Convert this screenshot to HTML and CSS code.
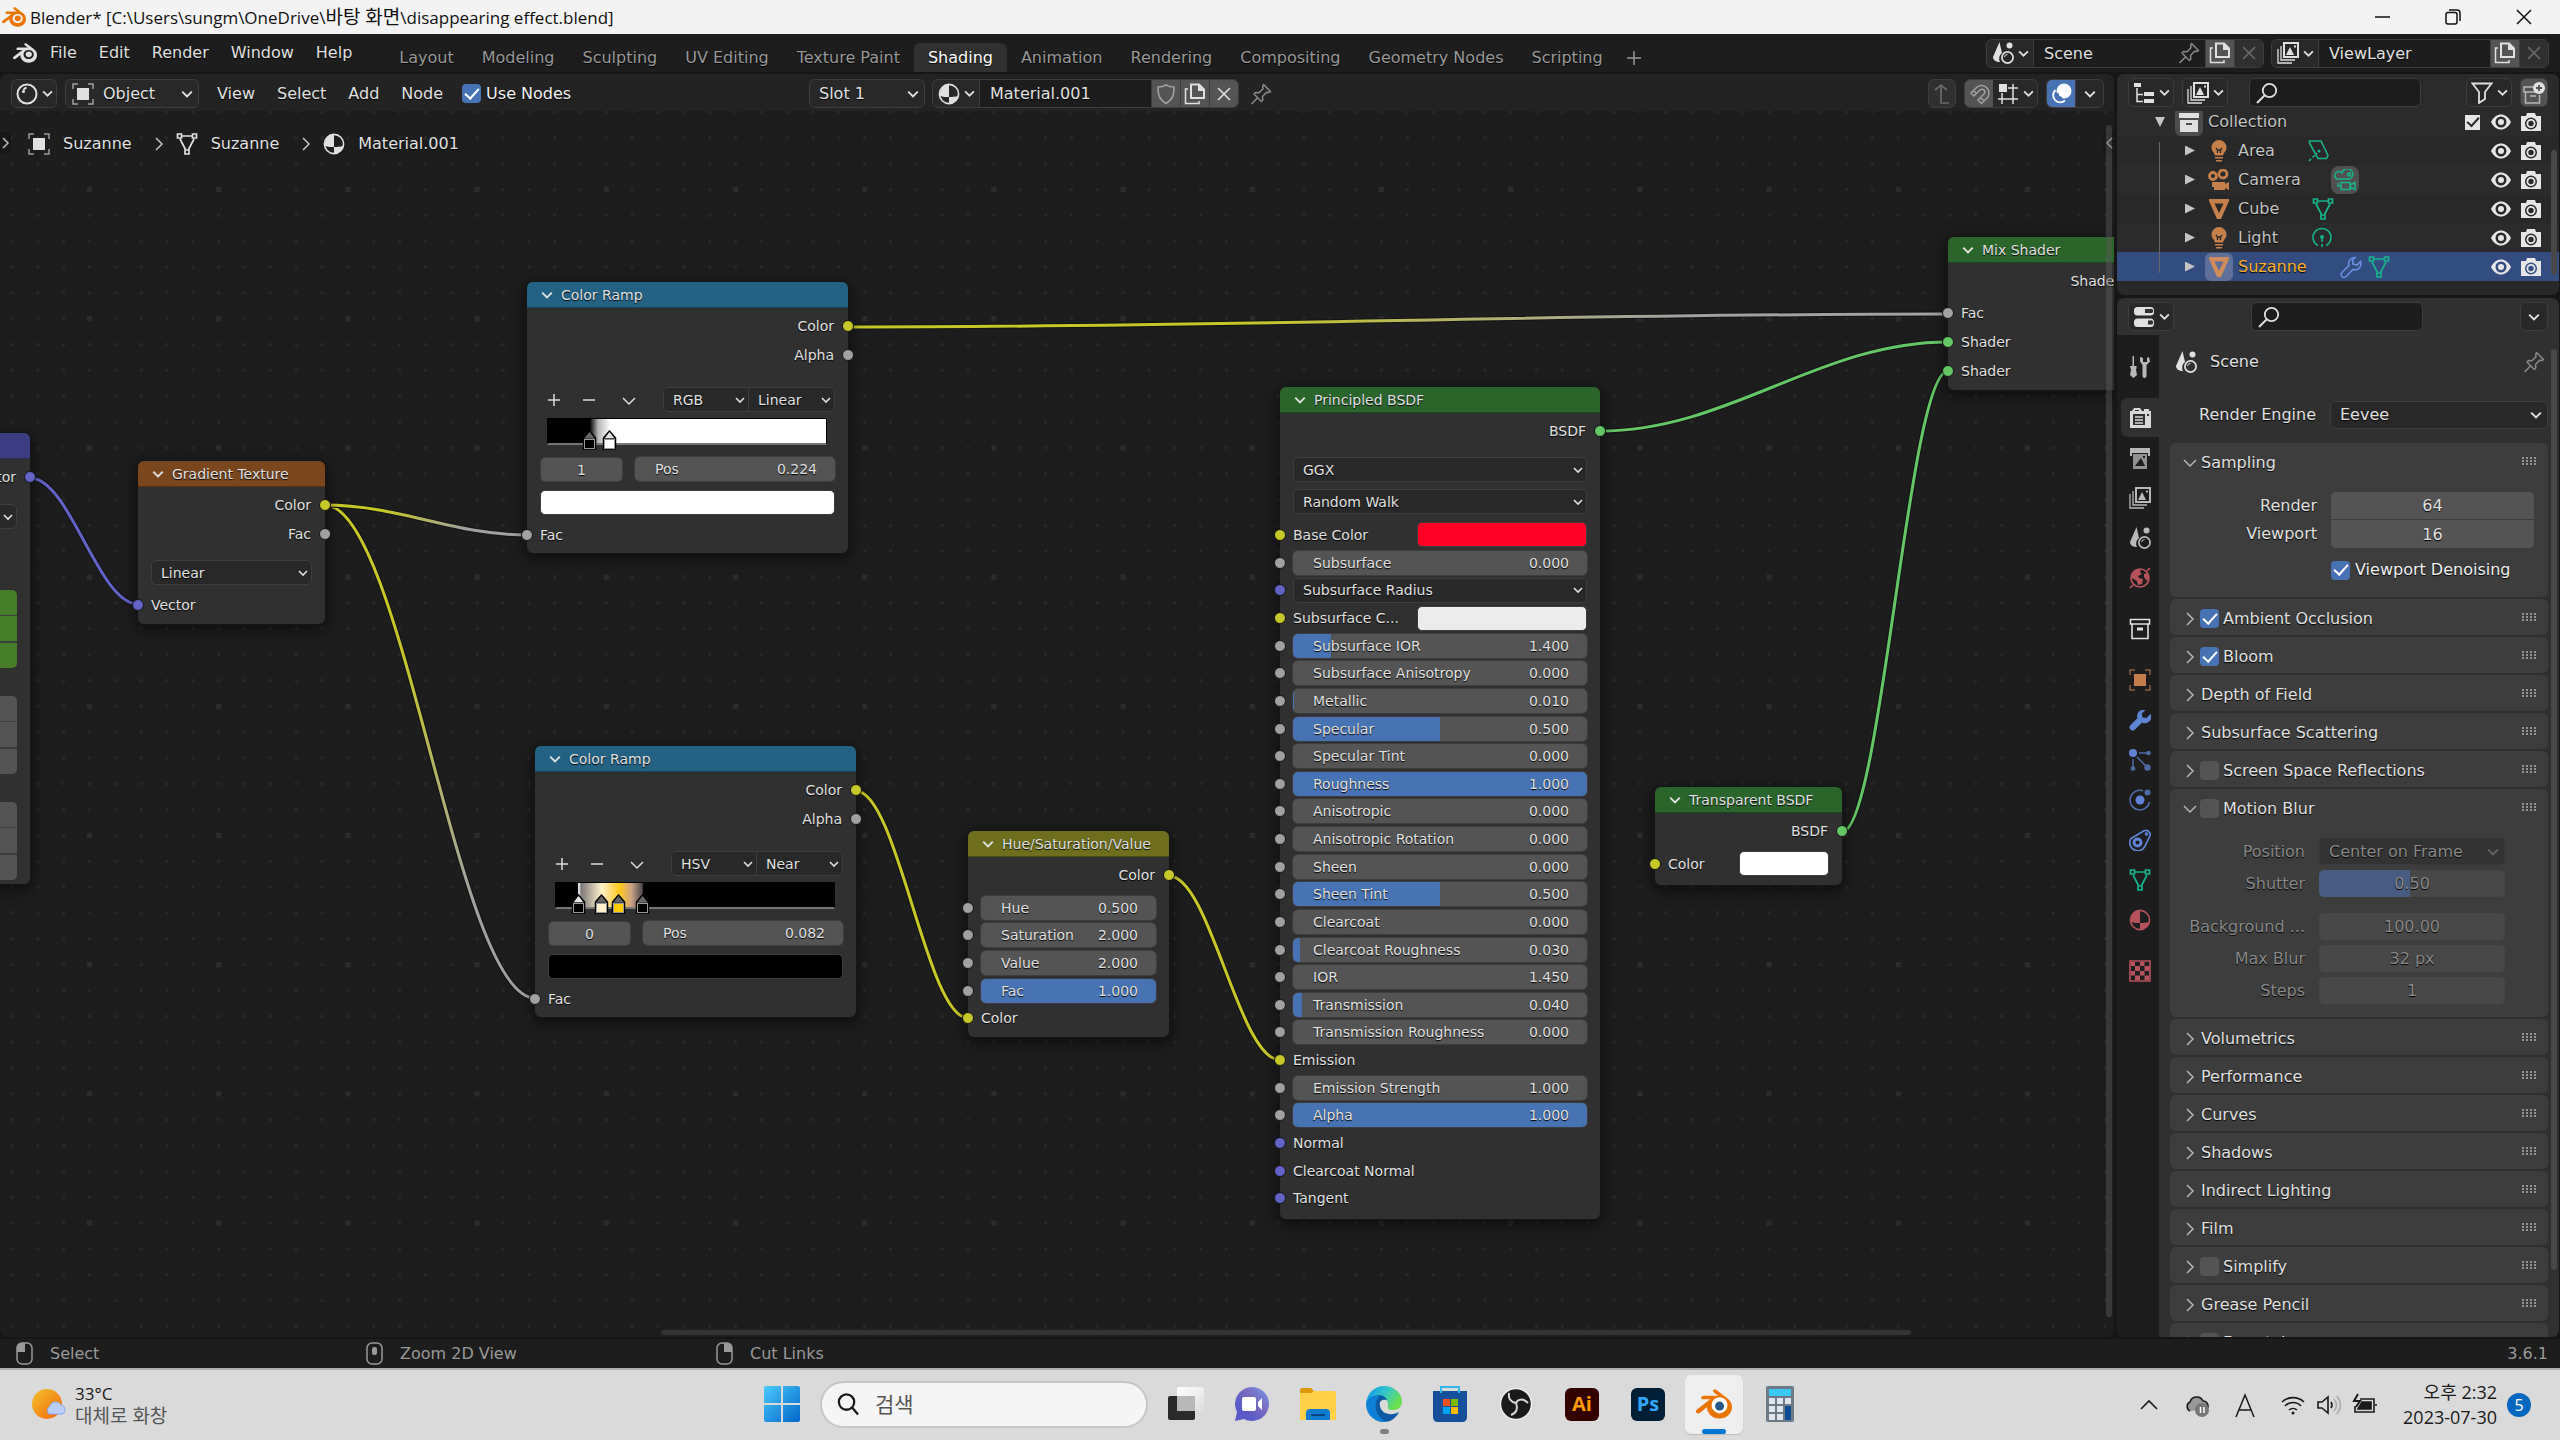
FILE: index.html
```html
<!DOCTYPE html>
<html lang="ko">
<head>
  <meta charset="UTF-8" />
  <meta name="viewport" content="width=device-width, initial-scale=1.0" />
  <title>Blender* [C:\Users\sungm\OneDrive\바탕 화면\disappearing effect.blend]</title>
  <link rel="stylesheet" href="styles.css">
</head>
<body>
  <!-- icon set -->
  <svg class="defs" width="0" height="0" aria-hidden="true">
    <symbol id="chev" viewBox="0 0 10 10"><path d="M1 3l4 4 4-4" fill="none" stroke="currentColor" stroke-width="1.6"/></symbol>
    <symbol id="blender" viewBox="0 0 24 24"><path fill="currentColor" d="M12.51 13.214c.046-.8.438-1.506 1.03-2.006a3.424 3.424 0 0 1 2.212-.79c.85 0 1.631.3 2.211.79.592.5.983 1.206 1.028 2.005.045.823-.285 1.586-.865 2.153a3.389 3.389 0 0 1-2.374.938 3.393 3.393 0 0 1-2.376-.938c-.58-.567-.91-1.33-.865-2.152M7.35 14.831c.006.314.106.922.256 1.398a7.372 7.372 0 0 0 1.593 2.757 8.227 8.227 0 0 0 2.787 2.001 8.947 8.947 0 0 0 3.66.76 8.964 8.964 0 0 0 3.657-.772 8.285 8.285 0 0 0 2.785-2.01 7.428 7.428 0 0 0 1.592-2.762 6.964 6.964 0 0 0 .25-3.074 7.123 7.123 0 0 0-1.016-2.779 7.764 7.764 0 0 0-1.852-2.043h.002L13.566 2.55l-.02-.015c-.492-.378-1.319-.376-1.86.002-.547.382-.609 1.015-.123 1.415l-.001.001 3.126 2.543-9.53.01h-.013c-.788.001-1.545.518-1.695 1.172-.154.665.38 1.217 1.2 1.22V8.9l4.83-.01-8.62 6.617-.034.025c-.813.622-1.075 1.658-.563 2.313.52.667 1.625.668 2.447.004L7.414 14s-.069.52-.063.831zm12.09 1.741c-.97.988-2.326 1.548-3.795 1.55-1.47.004-2.827-.552-3.797-1.538a4.51 4.51 0 0 1-1.036-1.622 4.282 4.282 0 0 1 .282-3.519 4.702 4.702 0 0 1 1.153-1.371c.942-.768 2.141-1.183 3.396-1.185 1.256-.002 2.455.41 3.398 1.175.48.391.87.854 1.152 1.367a4.28 4.28 0 0 1 .522 1.706 4.236 4.236 0 0 1-.239 1.811 4.54 4.54 0 0 1-1.035 1.626"/></symbol>
    <symbol id="shader" viewBox="0 0 22 22"><circle cx="11" cy="11" r="9.5" fill="none" stroke="currentColor" stroke-width="2"/><circle cx="7.5" cy="8.5" r="1.5" fill="currentColor"/><path d="M7.5 7a6 6 0 0 1 3-2.500" fill="none" stroke="currentColor" stroke-width="2"/></symbol>
    <symbol id="object" viewBox="0 0 22 22"><rect x="5" y="5" width="12" height="12" fill="currentColor"/><path d="M1 6V1h5M16 1h5v5M21 16v5h-5M6 21H1v-5" fill="none" stroke="currentColor" stroke-width="1.500" opacity=".65"/></symbol>
    <symbol id="mesh" viewBox="0 0 22 22"><g fill="none" stroke="currentColor" stroke-width="1.700"><path d="M6 3h10M4 6l5.500 10.500M18 6l-5.500 10.500"/><path d="M1.500 1h4v4h-4zM16.500 1h4v4h-4zM9 17h4v4H9z"/></g></symbol>
    <symbol id="meshfill" viewBox="0 0 22 22"><path fill="currentColor" fill-rule="evenodd" d="M1 1h20v2l-8 18H9L1 3zM6.500 5.500L11 15l4.500-9.500z"/></symbol>
    <symbol id="material" viewBox="0 0 22 22"><circle cx="11" cy="11" r="9.600" fill="none" stroke="currentColor" stroke-width="1.600"/><path fill="currentColor" d="M11 1.500A9.500 9.500 0 0 0 2 13c3 1 6 1 9 1zM11 14c3.500 0 6-.300 9-1a9.500 9.500 0 0 1-9 8z"/></symbol>
    <symbol id="shield" viewBox="0 0 22 22"><path d="M11 2c3 2 5.500 2 8 2 0 8-1 12-8 16.500C4 16 3 12 3 4c2.500 0 5 0 8-2z" fill="none" stroke="currentColor" stroke-width="1.600"/></symbol>
    <symbol id="copy" viewBox="0 0 22 22"><path d="M7 1.500h8l5 5V15H7z" fill="none" stroke="currentColor" stroke-width="2"/><path d="M14 1v7h7z" fill="currentColor"/><path d="M4 6H1.500v14.500H15V18" fill="none" stroke="currentColor" stroke-width="1.500"/></symbol>
    <symbol id="close" viewBox="0 0 22 22"><path d="M5 5l12 12M17 5L5 17" stroke="currentColor" stroke-width="1.600"/></symbol>
    <symbol id="pin" viewBox="0 0 22 22"><path d="M13.500 1.500l7 7-2 1-2-.300-4 4.300.300 3.500-1.500 1.500L4 11l1.500-1.500 3.500.300 4-4-.300-2zM8 14.500L1.500 21" fill="none" stroke="currentColor" stroke-width="1.500" stroke-linejoin="round"/></symbol>
    <symbol id="scene" viewBox="0 0 22 22"><path d="M7.500 0L1 15c0 3 3 5 7 5a7 7 0 0 1 2-9z" fill="currentColor"/><circle cx="17.500" cy="3.500" r="3" fill="currentColor"/><circle cx="15.500" cy="15.500" r="5.600" fill="none" stroke="currentColor" stroke-width="1.700"/><path d="M12.500 15a3 3 0 0 1 3-2.500" fill="none" stroke="currentColor"/></symbol>
    <symbol id="layers" viewBox="0 0 22 22"><g fill="none" stroke="currentColor"><path d="M7 1h14v14H7z" stroke-width="2"/><path d="M4 4v14h14M1 7v14h14" stroke-width="1.300"/></g><path d="M9 13l4-8 4 8zM17 3.500h2v2h-2z" fill="currentColor"/></symbol>
    <symbol id="up" viewBox="0 0 22 22"><path d="M4 7l6-5 6 5M10 2v18h8" fill="none" stroke="currentColor" stroke-width="1.700"/></symbol>
    <symbol id="magnet" viewBox="0 0 22 22"><path d="M3 10l6-6a7.500 7.500 0 0 1 10.500 10.500l-6 6-3.500-3.500 6-6a2.600 2.600 0 0 0-4-4l-6 6zM5.500 7.500L9 11M12.500 14.500L16 18" fill="none" stroke="currentColor" stroke-width="1.500"/></symbol>
    <symbol id="snap" viewBox="0 0 22 22"><path d="M5 10v11M16 1v20M1 16h20M11 5h10" fill="none" stroke="currentColor" stroke-width="1.500"/><rect x="2" y="1" width="8" height="8" fill="currentColor"/></symbol>
    <symbol id="overlay" viewBox="0 0 22 22"><circle cx="14" cy="8" r="7.500" fill="currentColor"/><path d="M5.500 7a7 7 0 1 0 9.500 10.500" fill="none" stroke="currentColor" stroke-width="1.800"/><path d="M8 10a3.500 3.500 0 0 0 4 4.500" fill="none" stroke="#4772b3" stroke-width="1.800"/></symbol>
    <symbol id="outliner" viewBox="0 0 22 22"><path fill="currentColor" d="M1 1h7v4H1zM11 10h10v4H11zM11 17h10v4H11z"/><path d="M4 6v13.500h6M4 12.500h6" fill="none" stroke="currentColor" stroke-width="1.500"/></symbol>
    <symbol id="search" viewBox="0 0 22 22"><circle cx="13.500" cy="8.500" r="6.700" fill="none" stroke="currentColor" stroke-width="1.800"/><path d="M9 13l-8 8" stroke="currentColor" stroke-width="2"/></symbol>
    <symbol id="filter" viewBox="0 0 22 22"><path d="M1.500 1.500h19L14 10v7l-6 4V10z" fill="none" stroke="currentColor" stroke-width="1.800"/></symbol>
    <symbol id="newcol" viewBox="0 0 22 22"><path d="M10 5H1v5h12M2.500 10v11h14v-8M7 14h6" fill="none" stroke="currentColor" stroke-width="1.500" opacity=".7"/><circle cx="16" cy="6" r="6" fill="currentColor"/><path d="M16 3v6M13 6h6" stroke="#545454" stroke-width="1.800"/></symbol>
    <symbol id="colfill" viewBox="0 0 22 22"><path fill="currentColor" fill-rule="evenodd" d="M1 2h20v5H1zM2 9h18v12H2zM8 12h6v2H8z"/></symbol>
    <symbol id="col" viewBox="0 0 22 22"><path d="M1.500 1.500h19V6h-19zM3 6v14.500h16V6" fill="none" stroke="currentColor" stroke-width="1.600"/><path d="M8 11h6" stroke="currentColor" stroke-width="3"/></symbol>
    <symbol id="eye" viewBox="0 0 22 22"><path fill="currentColor" fill-rule="evenodd" d="M1 11c3-5.500 6-7.500 10-7.500S18 5.500 21 11c-3 5.500-6 7.500-10 7.500S4 16.500 1 11zM11 5.500a5.500 5.500 0 1 0 0 11 5.500 5.500 0 0 0 0-11z"/><circle cx="11" cy="11" r="3" fill="currentColor"/></symbol>
    <symbol id="cam" viewBox="0 0 22 22"><path fill="currentColor" fill-rule="evenodd" d="M1 5h5l1-3h8l1 3h5v15H1zM11 6.500a6 6 0 1 0 0 12 6 6 0 0 0 0-12z"/><circle cx="11" cy="12.500" r="3.600" fill="none" stroke="currentColor" stroke-width="1.800"/></symbol>
    <symbol id="bulb" viewBox="0 0 22 22"><path fill="currentColor" d="M11 0a7.500 7.500 0 0 0-7.500 7.500C3.500 11 6 12 7 15.500h8c1-3.500 3.500-4.500 3.500-8A7.500 7.500 0 0 0 11 0zM7 17h8v1.600H7zM8 20h6v1.600H8z"/><path d="M8 8l1.500 2v3M14 8l-1.500 2v3M9.500 10h3" fill="none" stroke="#282828" stroke-width="1.300"/></symbol>
    <symbol id="camera" viewBox="0 0 22 22"><g fill="none" stroke="currentColor" stroke-width="2.800"><circle cx="5" cy="7" r="3.500"/><circle cx="15" cy="5" r="4"/></g><path fill="currentColor" d="M4 13h13v2l4-2v8l-4-2v2H6v-3H4z"/></symbol>
    <symbol id="cameraline" viewBox="0 0 22 22"><g fill="none" stroke="currentColor" stroke-width="1.500"><path d="M3 10a4 4 0 1 1 5-6 5.500 5.500 0 1 1 8 6z"/><circle cx="15" cy="5.500" r="1.500"/><path d="M7 13.500h9v7H7zM16 16l5-2.500v7L16 18M4 14v3h3"/></g></symbol>
    <symbol id="area" viewBox="0 0 22 22"><path d="M1.500 1H13l7 14.500-1.500 3H10L1.500 3z" fill="none" stroke="currentColor" stroke-width="1.600"/><path d="M1 21l8-8" stroke="currentColor" stroke-width="1.600" stroke-dasharray="3 2"/><circle cx="11" cy="11" r="1.500" fill="currentColor"/></symbol>
    <symbol id="point" viewBox="0 0 22 22"><path d="M7 18.500a9 9 0 1 1 8 0" fill="none" stroke="currentColor" stroke-width="1.600"/><circle cx="11" cy="10" r="2" fill="currentColor"/><path d="M11 12v10" stroke="currentColor" stroke-width="1.600" stroke-dasharray="3 2"/></symbol>
    <symbol id="wrenchline" viewBox="0 0 22 22"><path d="M15 1.500a6 6 0 0 0-6 8l-7 7a2.700 2.700 0 0 0 4 4l7-7a6 6 0 0 0 7.500-8L17 9l-4-1-.500-4z" fill="none" stroke="currentColor" stroke-width="1.600"/></symbol>
    <symbol id="wrench" viewBox="0 0 22 22"><path d="M15 1a6 6 0 0 0-6.500 8L1.500 16a3 3 0 0 0 4.500 4.500l7-7A6.300 6.300 0 0 0 21.500 5L17.500 9l-4-.500-.800-4L16.500 1z" fill="currentColor"/></symbol>
    <symbol id="props" viewBox="0 0 22 22"><rect x="1" y="1" width="20" height="8.500" rx="3.500" fill="currentColor"/><rect x="1" y="12.500" width="20" height="8.500" rx="3.500" fill="currentColor"/><path d="M12 3h5a2 2 0 0 1 2 4h-7zM15 14.500h2a2 2 0 0 1 2 4h-4z" fill="#303030"/></symbol>
    <symbol id="tool" viewBox="0 0 22 22"><path fill="currentColor" d="M3.500 0h1.500v10H3.500zM1 10h6.500v2L7 14l1 5-3.500 3L1 19l1-5zM11 1v4.500L13.500 9v11a2 2 0 0 0 4 0V9L21 5.500 20 1l-2 1v4h-4V2z"/></symbol>
    <symbol id="render" viewBox="0 0 22 22"><path fill="currentColor" fill-rule="evenodd" d="M3 4l2-3h6l2 3h2V2h5v2h2v17H1V4zM4 7v11h12V7zM18 7v2h2V7zM6 4h4V3H6z"/><path d="M6 10h8M6 13h8M6 16h8" stroke="currentColor" stroke-width="1.300"/></symbol>
    <symbol id="output" viewBox="0 0 22 22"><path d="M1 1h20v8h-2V6H3v3H1z" fill="currentColor"/><path fill="currentColor" fill-rule="evenodd" opacity=".75" d="M4 7h14v15H4zM6 19h10l-4-8zM14 9v2h2V9z"/></symbol>
    <symbol id="world" viewBox="0 0 22 22"><circle cx="11" cy="11" r="9" fill="none" stroke="currentColor" stroke-width="1.700"/><path d="M1 21l3-3M18 4l3-3" stroke="currentColor" stroke-width="1.700"/><path fill="currentColor" d="M3 7c2-4 5-5 9-5l-1 3 2 2-4 2 1 2 4 1-1 5-4 1-1-4-5-3zM15 7l4-1 1 5-2 3-3-4z"/></symbol>
    <symbol id="particles" viewBox="0 0 22 22"><circle cx="4" cy="4" r="4" fill="currentColor"/><g opacity=".75"><circle cx="19.500" cy="4" r="2.300" fill="currentColor"/><circle cx="4" cy="19.500" r="2.300" fill="currentColor"/><circle cx="18.500" cy="18.500" r="3.200" fill="currentColor"/><path d="M10 4h8M4 10v8M8 8l9 9" stroke="currentColor" stroke-width="1.500"/></g></symbol>
    <symbol id="physics" viewBox="0 0 22 22"><circle cx="11" cy="11" r="4.500" fill="currentColor"/><circle cx="18.500" cy="3.500" r="3" fill="currentColor" opacity=".75"/><path d="M14 1.800A9.800 9.800 0 1 0 20.500 13" fill="none" stroke="currentColor" stroke-width="1.500" opacity=".8"/></symbol>
    <symbol id="constraint" viewBox="0 0 22 22"><g fill="none" stroke="currentColor"><path d="M2 9.500L15 1.800a4.300 4.300 0 0 1 6 5L15.500 18A7.500 7.500 0 1 1 2 9.500z" stroke-width="1.700"/><circle cx="8.500" cy="13.500" r="3.500" stroke-width="3"/><circle cx="17.500" cy="5" r="1" stroke-width="1.500"/></g></symbol>
    <symbol id="texture" viewBox="0 0 22 22"><path d="M1 1h20v20H1z" fill="none" stroke="currentColor" stroke-width="1.600"/><path fill="currentColor" d="M2 2h4v4H2zM11 2h4.500v4H11zM6 6h5v5H6zM15.500 6H20v5h-4.500zM2 11h4v4.500H2zM11 11h4.500v4.500H11zM6 15.500h5V20H6zM15.500 15.500H20V20h-4.500z"/></symbol>
    <symbol id="grip" viewBox="0 0 16 8"><path d="M1 1h14M1 4h14M1 7h14" stroke="currentColor" stroke-width="1.400" stroke-dasharray="2 2" fill="none"/></symbol>
    <symbol id="mouse" viewBox="0 0 18 24"><rect x="1" y="1" width="15" height="21" rx="5" fill="none" stroke="currentColor" stroke-width="1.500"/></symbol>
    <symbol id="marker" viewBox="0 0 15 20"><path d="M1.500 19V8L7.500 1l6 7v11z" fill="#444" stroke="#000" stroke-width="1.500"/><path d="M3 8l4.500-6L12 8z" fill="var(--tip)"/><rect x="2.500" y="9.500" width="10" height="9" fill="var(--stop)" stroke="#999"/></symbol>
  </svg>

  <header class="titlebar">
    <svg class="title-logo"><use href="#blender"/></svg>
    <span class="title">Blender* [C:\Users\sungm\OneDrive\<span class="ko">바탕 화면</span>\disappearing effect.blend]</span>
    <div class="win-buttons">
      <button aria-label="Minimize"><svg viewBox="0 0 16 16"><path d="M0 8h15"/></svg></button>
      <button aria-label="Restore"><svg viewBox="0 0 16 16"><rect x="1" y="3.500" width="11" height="11.500" rx="2"/><path d="M4 1h8q3 0 3 3v8"/></svg></button>
      <button aria-label="Close"><svg viewBox="0 0 16 16"><path d="M1 1l14 14M15 1L1 15"/></svg></button>
    </div>
  </header>

  <div class="topbar">
    <button class="app-menu" aria-label="Blender"><svg class="icon"><use href="#blender"/></svg></button>
    <nav class="menus">
      <button>File</button><button>Edit</button><button>Render</button><button>Window</button><button>Help</button>
    </nav>
    <nav class="workspaces">
      <button>Layout</button><button>Modeling</button><button>Sculpting</button><button>UV Editing</button><button>Texture Paint</button><button class="active">Shading</button><button>Animation</button><button>Rendering</button><button>Compositing</button><button>Geometry Nodes</button><button>Scripting</button><button class="add" aria-label="Add workspace"><svg viewBox="0 0 14 14"><path d="M7 0v14M0 7h14"/></svg></button>
    </nav>
    <div class="group scene-group">
      <button class="icon-drop" aria-label="Browse scene"><svg class="icon"><use href="#scene"/></svg><svg class="chev"><use href="#chev"/></svg></button>
      <input class="name" aria-label="Scene name" value="Scene">
      <button class="pin" aria-label="Pin scene"><svg class="icon"><use href="#pin"/></svg></button>
      <button class="cell" aria-label="New scene"><svg class="icon"><use href="#copy"/></svg></button>
      <button class="cell off" aria-label="Delete scene"><svg class="icon"><use href="#close"/></svg></button>
    </div>
    <div class="group layer-group">
      <button class="icon-drop" aria-label="Browse view layer"><svg class="icon"><use href="#layers"/></svg><svg class="chev"><use href="#chev"/></svg></button>
      <input class="name" aria-label="View layer name" value="ViewLayer">
      <button class="cell" aria-label="New view layer"><svg class="icon"><use href="#copy"/></svg></button>
      <button class="cell off" aria-label="Remove view layer"><svg class="icon"><use href="#close"/></svg></button>
    </div>
  </div>

  <main class="workspace">
    <section class="editor">
      <div class="editor-header">
        <div class="left">
          <button class="box icon-drop" aria-label="Editor type"><svg class="icon"><use href="#shader"/></svg><svg class="chev"><use href="#chev"/></svg></button>
          <span class="select box mode"><svg class="icon"><use href="#object"/></svg><select aria-label="Shader type"><option>Object</option></select><svg class="chev"><use href="#chev"/></svg></span>
          <nav class="menus"><button>View</button><button>Select</button><button>Add</button><button>Node</button></nav>
          <label class="check"><input type="checkbox" checked>Use Nodes</label>
        </div>
        <div class="middle">
          <span class="select box slot"><select aria-label="Slot"><option>Slot 1</option></select><svg class="chev"><use href="#chev"/></svg></span>
          <div class="group material-group">
            <button class="icon-drop" aria-label="Browse material"><svg class="icon"><use href="#material"/></svg><svg class="chev"><use href="#chev"/></svg></button>
            <input class="name" aria-label="Material name" value="Material.001">
            <button class="cell dim" aria-label="Fake user"><svg class="icon"><use href="#shield"/></svg></button>
            <button class="cell" aria-label="New material"><svg class="icon"><use href="#copy"/></svg></button>
            <button class="cell" aria-label="Unlink"><svg class="icon"><use href="#close"/></svg></button>
          </div>
          <button class="pin" aria-label="Pin material"><svg class="icon"><use href="#pin"/></svg></button>
        </div>
        <div class="right">
          <button class="box single off" aria-label="Parent node tree"><svg class="icon"><use href="#up"/></svg></button>
          <div class="group">
            <button class="cell dim" aria-label="Snap"><svg class="icon"><use href="#magnet"/></svg></button>
            <button class="icon-drop" aria-label="Snap target"><svg class="icon"><use href="#snap"/></svg><svg class="chev"><use href="#chev"/></svg></button>
          </div>
          <div class="group">
            <button class="cell on" aria-label="Overlays"><svg class="icon"><use href="#overlay"/></svg></button>
            <button class="cell plain" aria-label="Overlay options"><svg class="chev"><use href="#chev"/></svg></button>
          </div>
        </div>
      </div>

      <div class="canvas">
        <svg class="links" width="100%" height="100%">
          <defs>
            <pattern id="grid" patternUnits="userSpaceOnUse" x="76" y="65" width="129.200" height="129.200">
              <g fill="#282828" id="dots"></g>
              <rect x="11" y="11" width="5" height="5" fill="#2d2d2d"/>
            </pattern>
            <linearGradient id="g1" gradientUnits="userSpaceOnUse" x1="848" y1="0" x2="1948" y2="0"><stop offset=".35" stop-color="#c7c729"/><stop offset=".75" stop-color="#a1a1a1"/></linearGradient>
            <linearGradient id="g2" gradientUnits="userSpaceOnUse" x1="325" y1="0" x2="527" y2="0"><stop offset=".3" stop-color="#c7c729"/><stop offset=".7" stop-color="#a1a1a1"/></linearGradient>
            <linearGradient id="g3" gradientUnits="userSpaceOnUse" x1="0" y1="394" x2="0" y2="887"><stop offset=".3" stop-color="#c7c729"/><stop offset=".8" stop-color="#a1a1a1"/></linearGradient>
          </defs>
          <rect width="100%" height="100%" fill="url(#grid)"/>
          <g id="wires" fill="none"></g>
        </svg>

        <article class="node mapping">
          <h2 class="vector">Mapping</h2>
          <div class="row out"><i class="socket blue"></i>Vector</div>
          <span class="select"><select aria-label="Mapping type"><option>Point</option></select><svg class="chev"><use href="#chev"/></svg></span>
          <div class="stack green"><input aria-label="Location X"><input aria-label="Location Y"><input aria-label="Location Z"></div>
          <div class="stack"><input aria-label="Rotation X"><input aria-label="Rotation Y"><input aria-label="Rotation Z"></div>
          <div class="stack"><input aria-label="Scale X"><input aria-label="Scale Y"><input aria-label="Scale Z"></div>
        </article>

        <article class="node gradient">
          <h2 class="texture"><svg class="fold"><use href="#chev"/></svg>Gradient Texture</h2>
          <div class="row out"><i class="socket yellow"></i>Color</div>
          <div class="row out"><i class="socket"></i>Fac</div>
          <span class="select"><select aria-label="Gradient type"><option>Linear</option></select><svg class="chev"><use href="#chev"/></svg></span>
          <div class="row"><i class="socket blue"></i>Vector</div>
        </article>

        <article class="node ramp ramp-a">
          <h2 class="converter"><svg class="fold"><use href="#chev"/></svg>Color Ramp</h2>
          <div class="row out"><i class="socket yellow"></i>Color</div>
          <div class="row out"><i class="socket"></i>Alpha</div>
          <div class="ramp-tools">
            <button aria-label="Add stop"><svg viewBox="0 0 12 12"><path d="M6 0v12M0 6h12"/></svg></button>
            <button aria-label="Remove stop"><svg viewBox="0 0 12 12"><path d="M0 6h12"/></svg></button>
            <button aria-label="Ramp tools"><svg viewBox="0 0 12 12"><path d="M0 4l6 6 6-6"/></svg></button>
            <span class="select pair-l"><select aria-label="Color mode"><option>RGB</option></select><svg class="chev"><use href="#chev"/></svg></span>
            <span class="select pair-r"><select aria-label="Interpolation"><option>Linear</option></select><svg class="chev"><use href="#chev"/></svg></span>
          </div>
          <div class="band" data-stops="15,#000,#666 22.4,#fff,#e6e6e6"></div>
          <div class="ramp-fields">
            <input class="index" aria-label="Active stop" value="1">
            <label class="field"><span>Pos</span><input value="0.224"></label>
          </div>
          <button class="swatch white" aria-label="Stop color"></button>
          <div class="row"><i class="socket"></i>Fac</div>
        </article>

        <article class="node ramp ramp-b">
          <h2 class="converter"><svg class="fold"><use href="#chev"/></svg>Color Ramp</h2>
          <div class="row out"><i class="socket yellow"></i>Color</div>
          <div class="row out"><i class="socket"></i>Alpha</div>
          <div class="ramp-tools">
            <button aria-label="Add stop"><svg viewBox="0 0 12 12"><path d="M6 0v12M0 6h12"/></svg></button>
            <button aria-label="Remove stop"><svg viewBox="0 0 12 12"><path d="M0 6h12"/></svg></button>
            <button aria-label="Ramp tools"><svg viewBox="0 0 12 12"><path d="M0 4l6 6 6-6"/></svg></button>
            <span class="select pair-l"><select aria-label="Color mode"><option>HSV</option></select><svg class="chev"><use href="#chev"/></svg></span>
            <span class="select pair-r"><select aria-label="Interpolation"><option>Near</option></select><svg class="chev"><use href="#chev"/></svg></span>
          </div>
          <div class="band" data-stops="8.2,#000,#e6e6e6 16.4,#fff1cc,#666 22.8,#ffcc00,#666 31.4,#000,#666"></div>
          <div class="ramp-fields">
            <input class="index" aria-label="Active stop" value="0">
            <label class="field"><span>Pos</span><input value="0.082"></label>
          </div>
          <button class="swatch black" aria-label="Stop color"></button>
          <div class="row"><i class="socket"></i>Fac</div>
        </article>

        <article class="node hsv">
          <h2 class="color"><svg class="fold"><use href="#chev"/></svg>Hue/Saturation/Value</h2>
          <div class="row out"><i class="socket yellow"></i>Color</div>
          <div class="inputs" data-rows="hsv"></div>
        </article>

        <article class="node principled">
          <h2 class="shader"><svg class="fold"><use href="#chev"/></svg>Principled BSDF</h2>
          <div class="row out"><i class="socket green"></i>BSDF</div>
          <span class="select"><select aria-label="Distribution"><option>GGX</option></select><svg class="chev"><use href="#chev"/></svg></span>
          <span class="select"><select aria-label="Subsurface method"><option>Random Walk</option></select><svg class="chev"><use href="#chev"/></svg></span>
          <div class="row base"><i class="socket yellow"></i><span>Base Color</span><button class="swatch red" aria-label="Base Color"></button></div>
          <div class="inputs" data-rows="principled"></div>
        </article>

        <article class="node transparent">
          <h2 class="shader"><svg class="fold"><use href="#chev"/></svg>Transparent BSDF</h2>
          <div class="row out"><i class="socket green"></i>BSDF</div>
          <div class="row tint"><i class="socket yellow"></i><span>Color</span><button class="swatch white" aria-label="Color"></button></div>
        </article>

        <article class="node mix">
          <h2 class="shader"><svg class="fold"><use href="#chev"/></svg>Mix Shader</h2>
          <div class="row out"><i class="socket green"></i>Shader</div>
          <div class="row first"><i class="socket"></i>Fac</div>
          <div class="row"><i class="socket green"></i>Shader</div>
          <div class="row"><i class="socket green"></i>Shader</div>
        </article>

        <div class="breadcrumb">
          <svg class="icon"><use href="#object"/></svg><span>Suzanne</span><svg class="sep" viewBox="0 0 8 14"><path d="M1 1l6 6-6 6"/></svg>
          <svg class="icon"><use href="#mesh"/></svg><span>Suzanne</span><svg class="sep" viewBox="0 0 8 14"><path d="M1 1l6 6-6 6"/></svg>
          <svg class="icon"><use href="#material"/></svg><span>Material.001</span>
        </div>
        <button class="toggle toggle-l" aria-label="Show toolbar"><svg viewBox="0 0 8 14"><path d="M1 2l5 5-5 5"/></svg></button>
        <button class="toggle toggle-r" aria-label="Show sidebar"><svg viewBox="0 0 8 14"><path d="M7 2L2 7l5 5"/></svg></button>
        <div class="bar-v"></div>
        <div class="bar-h"></div>
      </div>
    </section>

    <aside class="side">
      <section class="outliner">
        <div class="side-header">
          <button class="box icon-drop" aria-label="Editor type"><svg class="icon"><use href="#outliner"/></svg><svg class="chev"><use href="#chev"/></svg></button>
          <button class="box icon-drop" aria-label="Display mode"><svg class="icon"><use href="#layers"/></svg><svg class="chev"><use href="#chev"/></svg></button>
          <label class="search"><svg class="icon"><use href="#search"/></svg><input type="text" aria-label="Filter outliner"></label>
          <button class="box icon-drop filter" aria-label="Filter"><svg class="icon"><use href="#filter"/></svg><svg class="chev"><use href="#chev"/></svg></button>
          <button class="box single lit" aria-label="New collection"><svg class="icon"><use href="#newcol"/></svg></button>
        </div>
        <ul class="tree">
          <li class="collection"><span class="tri open"></span><span class="badge"><svg class="icon"><use href="#colfill"/></svg></span><span class="label">Collection</span><span class="end"><input type="checkbox" class="light" aria-label="Exclude" checked><svg class="icon"><use href="#eye"/></svg><svg class="icon"><use href="#cam"/></svg></span></li>
          <li><span class="tri"></span><span class="badge orange"><svg class="icon"><use href="#bulb"/></svg></span><span class="label">Area</span><svg class="icon data"><use href="#area"/></svg><span class="end"><svg class="icon"><use href="#eye"/></svg><svg class="icon"><use href="#cam"/></svg></span></li>
          <li><span class="tri"></span><span class="badge orange"><svg class="icon"><use href="#camera"/></svg></span><span class="label">Camera</span><svg class="icon data boxed"><use href="#cameraline"/></svg><span class="end"><svg class="icon"><use href="#eye"/></svg><svg class="icon"><use href="#cam"/></svg></span></li>
          <li><span class="tri"></span><span class="badge orange"><svg class="icon"><use href="#meshfill"/></svg></span><span class="label">Cube</span><svg class="icon data"><use href="#mesh"/></svg><span class="end"><svg class="icon"><use href="#eye"/></svg><svg class="icon"><use href="#cam"/></svg></span></li>
          <li><span class="tri"></span><span class="badge orange"><svg class="icon"><use href="#bulb"/></svg></span><span class="label">Light</span><svg class="icon data"><use href="#point"/></svg><span class="end"><svg class="icon"><use href="#eye"/></svg><svg class="icon"><use href="#cam"/></svg></span></li>
          <li class="active"><span class="tri"></span><span class="badge orange"><svg class="icon"><use href="#meshfill"/></svg></span><span class="label">Suzanne</span><svg class="icon mod"><use href="#wrenchline"/></svg><svg class="icon data"><use href="#mesh"/></svg><span class="end"><svg class="icon"><use href="#eye"/></svg><svg class="icon"><use href="#cam"/></svg></span></li>
        </ul>
        <div class="tree-line"></div>
        <div class="side-bar"></div>
      </section>

      <section class="properties">
        <div class="side-header">
          <button class="box icon-drop" aria-label="Editor type"><svg class="icon"><use href="#props"/></svg><svg class="chev"><use href="#chev"/></svg></button>
          <label class="search wide"><svg class="icon"><use href="#search"/></svg><input type="text" aria-label="Search properties"></label>
          <button class="box single options" aria-label="Options"><svg class="chev"><use href="#chev"/></svg></button>
        </div>
        <div class="props-body">
          <nav class="prop-tabs">
            <button class="last" aria-label="Tool"><svg class="icon"><use href="#tool"/></svg></button>
            <button class="active" aria-label="Render"><svg class="icon"><use href="#render"/></svg></button>
            <button aria-label="Output"><svg class="icon"><use href="#output"/></svg></button>
            <button aria-label="View Layer"><svg class="icon"><use href="#layers"/></svg></button>
            <button aria-label="Scene"><svg class="icon"><use href="#scene"/></svg></button>
            <button class="c-red last" aria-label="World"><svg class="icon"><use href="#world"/></svg></button>
            <button class="c-light last" aria-label="Collection"><svg class="icon"><use href="#col"/></svg></button>
            <button class="c-orange" aria-label="Object"><svg class="icon"><use href="#object"/></svg></button>
            <button class="c-blue" aria-label="Modifiers"><svg class="icon"><use href="#wrench"/></svg></button>
            <button class="c-blue" aria-label="Particles"><svg class="icon"><use href="#particles"/></svg></button>
            <button class="c-blue" aria-label="Physics"><svg class="icon"><use href="#physics"/></svg></button>
            <button class="c-blue" aria-label="Constraints"><svg class="icon"><use href="#constraint"/></svg></button>
            <button class="c-green" aria-label="Data"><svg class="icon"><use href="#mesh"/></svg></button>
            <button class="c-red last" aria-label="Material"><svg class="icon"><use href="#material"/></svg></button>
            <button class="c-red last" aria-label="Texture"><svg class="icon"><use href="#texture"/></svg></button>
          </nav>
          <div class="panels">
            <div class="context"><svg class="icon"><use href="#scene"/></svg><span>Scene</span><button class="pin" aria-label="Pin"><svg class="icon"><use href="#pin"/></svg></button></div>
            <div class="engine"><label for="engine">Render Engine</label><span class="select"><select id="engine"><option>Eevee</option></select><svg class="chev"><use href="#chev"/></svg></span></div>
            <div id="panels"></div>
          </div>
        </div>
        <div class="side-bar"></div>
      </section>
    </aside>
  </main>

  <footer class="statusbar">
    <div><svg class="mouse" viewBox="0 0 18 24"><use href="#mouse"/><path d="M1 10V6q0-5 5-5h3v9z"/></svg>Select</div>
    <div><svg class="mouse" viewBox="0 0 18 24"><use href="#mouse"/><rect x="6" y="5" width="5" height="8" rx="2"/></svg>Zoom 2D View</div>
    <div><svg class="mouse" viewBox="0 0 18 24"><use href="#mouse"/><path d="M8 10V1h3q5 0 5 5v4z"/></svg>Cut Links</div>
    <span class="version">3.6.1</span>
  </footer>

  <footer class="taskbar">
    <div class="weather">
      <svg viewBox="0 0 36 32"><defs><linearGradient id="sun" x1="0" y1="0" x2="1" y2="1"><stop stop-color="#f2c230"/><stop offset="1" stop-color="#f4660c"/></linearGradient></defs><circle cx="15" cy="15" r="15" fill="url(#sun)"/><path d="M17 25a5 5 0 0 1 1-8 6 6 0 0 1 11-1 5 5 0 0 1 2 9z" fill="#b9cdfa" stroke="#89a6ea"/></svg>
      <div><b>33°C</b><span>대체로 화창</span></div>
    </div>
    <div class="apps">
      <button class="start" aria-label="Start"><svg viewBox="0 0 36 36"><defs><linearGradient id="win" x1="0" y1="0" x2="1" y2="1"><stop stop-color="#4cc9fb"/><stop offset="1" stop-color="#0067c9"/></linearGradient></defs><path fill="url(#win)" d="M2 0h15v17H0V2q0-2 2-2zM19 0h15q2 0 2 2v15H19zM0 19h17v17H2q-2 0-2-2zM19 19h17v15q0 2-2 2H19z"/></svg></button>
      <label class="task-search"><svg viewBox="0 0 24 24"><circle cx="11" cy="10" r="8"/><path d="M17 16l6 7"/></svg><input type="text" placeholder="검색" aria-label="검색"></label>
      <button aria-label="Task view"><svg viewBox="0 0 36 36"><defs><linearGradient id="glass" x1="0" y1="0" x2="1" y2="1"><stop stop-color="#fff"/><stop offset="1" stop-color="#ddd"/></linearGradient></defs><rect x="0" y="10" width="27" height="24" rx="2" fill="#2a2a2a"/><rect x="9" y="1" width="27" height="24" rx="2" fill="url(#glass)"/><path d="M9 10h18v15H9z" fill="#b8b8b8"/></svg></button>
      <button aria-label="Chat"><svg viewBox="0 0 36 36"><defs><linearGradient id="chat" x1="0" y1="1" x2="1" y2="0"><stop offset=".3" stop-color="#5b5bc8"/><stop offset=".6" stop-color="#7b6cc0"/><stop offset="1" stop-color="#6f9cf0"/></linearGradient></defs><path d="M18 1a17 17 0 1 1-8 32l-9 2 2-9A17 17 0 0 1 18 1z" fill="url(#chat)"/><rect x="8" y="11" width="14" height="14" rx="2" fill="#fff"/><path d="M24 16l4-4v12l-4-4z" fill="#fff"/></svg></button>
      <button aria-label="Explorer"><svg viewBox="0 0 36 36"><path d="M0 4q0-2 2-2h9l4 4-3 3H0z" fill="#dc9a08"/><path d="M0 7h11l3-2h20q2 0 2 2v27H0z" fill="#ffcf48"/><path d="M6 34v-7q0-4 4-4h16q4 0 4 4v7z" fill="#0f7cd2"/><path d="M11 29h14" stroke="#07467d" stroke-width="2"/></svg></button>
      <button class="running" aria-label="Edge"><svg viewBox="0 0 36 36"><defs><linearGradient id="edge" x1="0" y1="0" x2="1" y2=".5"><stop offset=".2" stop-color="#18a4e0"/><stop offset=".55" stop-color="#36c6c8"/><stop offset="1" stop-color="#6be04a"/></linearGradient></defs><path d="M0 17C1 7 9 0 18 0c11 0 18 8 18 15 0 6-4 9-9 9-4 0-6-1-5-4 2-8-12-14-22-3z" fill="url(#edge)"/><path d="M1 16c6-9 18-8 20-2-6-1-8 2-7 6 1 7 10 11 19 6-3 6-8 10-15 10A18 18 0 0 1 1 16z" fill="#0c59a4"/><path d="M0 18c1-7 8-10 14-8-7 5-6 19 6 26A18 18 0 0 1 0 18z" fill="#0f80d8"/></svg></button>
      <button aria-label="Store"><svg viewBox="0 0 36 36"><path d="M9 7V1h18v6" fill="none" stroke="#35b6ee" stroke-width="2"/><path d="M1 5h34v26q0 5-5 5H6q-5 0-5-5z" fill="#17509a"/><path d="M9 7V1h18v6" fill="none" stroke="#35b6ee" stroke-width="2"/><path d="M11 13h7v7h-7z" fill="#f25022"/><path d="M19 13h7v7h-7z" fill="#7fba00"/><path d="M11 21h7v7h-7z" fill="#00a4ef"/><path d="M19 21h7v7h-7z" fill="#ffb900"/></svg></button>
      <button aria-label="OBS"><svg viewBox="0 0 36 36"><circle cx="18" cy="18" r="15.500" fill="#1b1b1d" stroke="#eee" stroke-width="1.500"/><g fill="none" stroke="#d8d8d8" stroke-width="2"><path d="M11 7c-1 6 2 9 7 10"/><path d="M30 17c-5-5-10-4-12 0"/><path d="M13 29c6-2 7-7 5-12"/></g></svg></button>
      <button class="adobe ai" aria-label="Illustrator"><span>Ai</span></button>
      <button class="adobe ps" aria-label="Photoshop"><span>Ps</span></button>
      <button class="current" aria-label="Blender"><svg viewBox="0 0 24 24"><circle cx="15.700" cy="13.500" r="6" fill="#fff"/><circle cx="15.700" cy="13.400" r="3" fill="#265787"/><path fill="#ea7600" fill-rule="evenodd" d="M7.350 14.831c.006.314.106.922.256 1.398a7.372 7.372 0 0 0 1.593 2.757 8.227 8.227 0 0 0 2.787 2.001 8.947 8.947 0 0 0 3.660.760 8.964 8.964 0 0 0 3.657-.772 8.285 8.285 0 0 0 2.785-2.010 7.428 7.428 0 0 0 1.592-2.762 6.964 6.964 0 0 0 .250-3.074 7.123 7.123 0 0 0-1.016-2.779 7.764 7.764 0 0 0-1.852-2.043L13.566 2.550c-.492-.378-1.339-.391-1.880-.013-.547.382-.609 1.015-.123 1.415l3.125 2.544-9.530.010c-.788.001-1.558.518-1.708 1.172-.154.665.380 1.217 1.200 1.220l4.830-.008-8.654 6.642c-.813.622-1.075 1.658-.563 2.313.520.667 1.625.668 2.447.004L7.414 14s-.070.520-.063.831zm12.090 1.741a5.300 5.300 0 1 1 .010-.010z"/></svg></button>
      <button aria-label="Calculator"><svg viewBox="0 0 36 36"><rect x="4" y="0" width="28" height="36" rx="2" fill="#6c7986"/><rect x="7" y="3" width="22" height="7" fill="#3cc8f4"/><path fill="#dfe5ea" d="M7 12h6v6H7zM15 12h6v6h-6zM23 12h6v6h-6zM7 20h6v6H7zM15 20h6v6h-6zM7 28h6v6H7zM15 28h6v6h-6z"/><path fill="#0d4b95" d="M23 20h6v14h-6z"/></svg></button>
    </div>
    <div class="tray">
      <svg viewBox="0 0 24 24"><path d="M4 16l8-8 8 8"/></svg>
      <svg viewBox="0 0 24 24"><path d="M5 18a5 5 0 0 1 0-9 7 7 0 0 1 13-1 5 5 0 0 1 4 8" fill="#999"/><circle cx="17" cy="17" r="7" fill="#777" stroke="none"/><path d="M15.500 14v6M19 14v6" stroke="#fff" stroke-width="1.500"/></svg>
      <svg viewBox="0 0 24 24"><path d="M3 24L12 2l9 22M6 17h12" stroke-width="1.500"/></svg>
      <svg viewBox="0 0 24 24"><path d="M1 9a16 16 0 0 1 22 0M4 13a11 11 0 0 1 16 0M8 17a6 6 0 0 1 8 0"/><circle cx="12" cy="20" r="1.500" fill="#1a1a1a" stroke="none"/></svg>
      <svg viewBox="0 0 24 24"><path d="M1 9h4l6-5v16l-6-5H1zM14 9q2 3 0 6"/><path d="M17 6q5 6 0 12M20 3q7 9 0 18" stroke="#aaa"/></svg>
      <svg viewBox="0 0 24 24"><path d="M7 6h14v13H2v-6M22 12h2"/><path d="M9 9h9v7H5z" fill="#1a1a1a"/><path d="M5 1L1 8h6L3 14" stroke-width="2"/></svg>
      <div class="clock"><span>오후 2:32</span><span>2023-07-30</span></div>
      <span class="count">5</span>
    </div>
  </footer>

  <script>
    // [name, value, fill %]; a string in third place is the socket colour
    const rows = {
      hsv: [["Hue", "0.500"], ["Saturation", "2.000"], ["Value", "2.000"], ["Fac", "1.000", 100], ["Color", null, "yellow"]],
      principled: [
        ["Subsurface", "0.000"], ["Subsurface Radius", "menu", "blue"], ["Subsurface C...", "swatch", "yellow"],
        ["Subsurface IOR", "1.400", 13], ["Subsurface Anisotropy", "0.000"], ["Metallic", "0.010", 0.4],
        ["Specular", "0.500", 50], ["Specular Tint", "0.000"], ["Roughness", "1.000", 100],
        ["Anisotropic", "0.000"], ["Anisotropic Rotation", "0.000"], ["Sheen", "0.000"], ["Sheen Tint", "0.500", 50],
        ["Clearcoat", "0.000"], ["Clearcoat Roughness", "0.030", 2.4], ["IOR", "1.450"], ["Transmission", "0.040", 3],
        ["Transmission Roughness", "0.000"], ["Emission", null, "yellow"], ["Emission Strength", "1.000"],
        ["Alpha", "1.000", 100], ["Normal", null, "blue"], ["Clearcoat Normal", null, "blue"], ["Tangent", null, "blue"]
      ]
    };
    const chev = '<svg class="chev"><use href="#chev"/></svg>';

    document.querySelectorAll(".inputs").forEach(box => {
      box.innerHTML = rows[box.dataset.rows].map(([name, value, extra]) => {
        const color = typeof extra === "string" ? extra : "";
        let body = `<label class="field" style="--fill: ${extra || 0}%"><span>${name}</span><input value="${value}"></label>`;
        if (value === null) body = name;
        if (value === "menu") body = `<span class="select"><select aria-label="${name}"><option>${name}</option></select>${chev}</span>`;
        if (value === "swatch") body = `<span>${name}</span><button class="swatch pale" aria-label="Subsurface Color"></button>`;
        return `<div class="row"><i class="socket ${color}"></i>${body}</div>`;
      }).join("");
    });

    document.querySelectorAll(".band").forEach(band => {
      band.innerHTML = band.dataset.stops.split(" ").map(s => {
        const [pos, color, tip] = s.split(",");
        return `<svg style="left: ${pos}%; --stop: ${color}; --tip: ${tip}"><use href="#marker"/></svg>`;
      }).join("");
    });

    // node links: x1, y1, x2, y2, colour
    const links = [
      [30, 367, 138, 493, "#6363c7"],
      [325, 394, 535, 887, "url(#g3)"],
      [325, 394, 527, 424, "url(#g2)"],
      [848, 216, 1948, 203, "url(#g1)"],
      [856, 680, 968, 907, "#c7c729"],
      [1169, 765, 1280, 949, "#c7c729"],
      [1600, 320, 1948, 231, "#63c763"],
      [1842, 721, 1948, 260, "#63c763"]
    ];
    document.getElementById("wires").innerHTML = links.map(([x1, y1, x2, y2, c]) => {
      const h = (x2 - x1) * 0.37;
      const d = `M${x1} ${y1}C${x1 + h} ${y1} ${x2 - h} ${y2} ${x2} ${y2}`;
      return `<path d="${d}" stroke="#141414" stroke-width="5"/><path d="${d}" stroke="${c}" stroke-width="3"/>`;
    }).join("");

    let dots = "";
    for (let i = 0; i < 5; i++)
      for (let j = 0; j < 5; j++)
        if (i || j) dots += `<rect x="${12 + i * 25.84}" y="${12 + j * 25.84}" width="3" height="3"/>`;
    document.getElementById("dots").innerHTML = dots;

    // properties panels: title, checkbox (true/false/undefined), body
    const sampling = `<div class="body sampling">
      <label for="r">Render</label><input id="r" class="top" value="64">
      <label for="v">Viewport</label><input id="v" class="bottom" value="16">
      <label class="check"><input type="checkbox" checked>Viewport Denoising</label></div>`;
    const motion = `<div class="body motion">
      <label for="mp">Position</label><span class="select"><select id="mp"><option>Center on Frame</option></select>${chev}</span>
      <label for="ms">Shutter</label><input id="ms" class="half" value="0.50">
      <label for="mb" class="spaced">Background ...</label><input id="mb" class="spaced" value="100.00">
      <label for="mm">Max Blur</label><input id="mm" value="32 px">
      <label for="mt">Steps</label><input id="mt" value="1"></div>`;
    const panels = [
      ["Sampling", undefined, sampling], ["Ambient Occlusion", true], ["Bloom", true], ["Depth of Field"],
      ["Subsurface Scattering"], ["Screen Space Reflections", false], ["Motion Blur", false, motion],
      ["Volumetrics"], ["Performance"], ["Curves"], ["Shadows"], ["Indirect Lighting"], ["Film"],
      ["Simplify", false], ["Grease Pencil"], ["Freestyle", false]
    ];
    document.getElementById("panels").innerHTML = panels.map(([title, check, body]) => {
      const box = check === undefined ? title : `<label class="check"><input type="checkbox" ${check ? "checked" : ""}>${title}</label>`;
      return `<section class="panel ${body ? "open" : ""}"><h3><svg class="arrow" viewBox="0 0 14 14"><path d="M4 1l6 6-6 6"/></svg>${box}<svg class="grip"><use href="#grip"/></svg></h3>${body || ""}</section>`;
    }).join("");
  </script>
</body>
</html>
```
FILE: styles.css
```css
* { box-sizing: border-box; }
body {
  margin: 0;
  height: 100vh;
  display: grid;
  grid-template-rows: 34px 40px 1fr 31px 72px;
  overflow: hidden;
  background: #161616;
  color: #e0e0e0;
  font: 16px/20px "DejaVu Sans", "Noto Sans CJK KR", sans-serif;
}
button, input, select {
  font: inherit;
  color: inherit;
  text-shadow: inherit;
  background: none;
  border: 0;
  padding: 0;
  margin: 0;
  min-width: 0;
  outline: none;
}
select { appearance: none; }
button { display: flex; align-items: center; justify-content: center; }
svg { display: block; flex: none; overflow: visible; }
.defs { position: absolute; }
.icon { width: 22px; height: 22px; }
.chev { width: 12px; height: 12px; }

/* window title */
.titlebar {
  display: flex;
  align-items: center;
  background: #f3f3f3;
  color: #111;
  font: 17px/24px "Open Sans", "Noto Sans CJK KR", sans-serif;
}
.title-logo { width: 24px; height: 24px; margin: 0 4px 0 2px; color: #ea7600; }
.ko { font-size: 19px; }
.win-buttons { display: flex; margin-left: auto; }
.win-buttons button { width: 70px; height: 34px; }
.win-buttons svg { width: 16px; height: 16px; fill: none; stroke: #111; stroke-width: 1.5; }
.win-buttons button:last-child { width: 72px; }

/* top bar */
.topbar {
  display: flex;
  align-items: center;
  background: #1d1d1d;
  border-bottom: 2px solid #161616;
  text-shadow: 0 1px 1px #000;
}
.app-menu { margin: 0 2px 0 13px; }
.app-menu .icon { width: 24px; height: 24px; }
.menus { display: flex; }
.menus button { padding: 0 11px; }
.workspaces { display: flex; align-self: flex-end; margin-left: 22px; color: #989898; }
.workspaces button { height: 29px; padding: 0 14px; border-radius: 6px 6px 0 0; }
.workspaces .active { background: #303030; color: #fff; }
.workspaces .add { padding: 0 10px; }
.add svg { width: 14px; height: 14px; stroke: currentColor; stroke-width: 1.5; }

.group, .box { height: 29px; border: 1px solid #3d3d3d; border-radius: 6px; background: #282828; }
.group { display: flex; overflow: hidden; }
.group > * { height: 27px; }
.icon-drop { width: 46px; gap: 4px; }
.icon-drop .chev { width: 11px; height: 11px; }
.group .name { background: #1d1d1d; border-left: 1px solid #3d3d3d; padding-left: 10px; flex: 1; }
.group .pin { width: 32px; background: #1d1d1d; }
.pin { color: #8a8a8a; }
.cell { width: 29px; background: #545454; border-left: 1px solid #3d3d3d; }
.cell:first-child { border-left: 0; }
.cell.off { background: #303030; color: #6a6a6a; }
.cell.dim { color: #a0a0a0; }
.cell.plain { background: none; }
.cell.on { background: #4772b3; color: #fff; }
.single { width: 28px; }
.single.off { background: #303030; color: #6a6a6a; }
.single.lit { background: #545454; }
.scene-group { width: 278px; margin-left: auto; }
.layer-group { width: 278px; margin: 0 11px 0 7px; }

.select { display: flex; align-items: center; background: #282828; border: 1px solid #3d3d3d; border-radius: 6px; }
.select select { flex: 1; align-self: stretch; padding-left: 9px; }
.select .chev { margin-right: 5px; pointer-events: none; }

/* node editor */
.workspace { display: grid; grid-template-columns: 1fr 443px; gap: 3px; min-height: 0; text-shadow: 0 1px 1px #000; }
.editor { display: flex; flex-direction: column; min-width: 0; min-height: 0; border-radius: 7px; overflow: hidden; background: #1d1d1d; }
.editor-header {
  display: grid;
  grid-template-columns: 809px 1fr auto;
  height: 37px;
  padding-top: 2px;
  align-items: center;
  background: #232323;
}
.editor-header > div { display: flex; align-items: center; }
.left { padding-left: 11px; gap: 8px; }
.left .mode { width: 134px; padding-left: 6px; }
.left .menus { margin: 0 0 0 -1px; }
.middle { gap: 7px; }
.slot { width: 116px; }
.material-group { width: 307px; }
.middle .pin { margin-left: 4px; }
.right { gap: 8px; padding-right: 10px; }
.right .cell { width: 28px; }
.right .icon-drop { width: 44px; }
.check { display: flex; align-items: center; gap: 5px; color: #f0f0f0; }
input[type="checkbox"] {
  appearance: none;
  width: 19px;
  height: 19px;
  border-radius: 4px;
  background: #545454;
  display: grid;
  place-items: center;
}
input[type="checkbox"]:checked { background: #4772b3; }
input[type="checkbox"]:checked::after {
  content: "";
  width: 12px;
  height: 6px;
  border: solid #fff;
  border-width: 0 0 2px 2px;
  transform: translateY(-2px) rotate(-48deg);
}

.canvas { position: relative; flex: 1; overflow: hidden; font-size: 14px; }
.links { position: absolute; inset: 0; }
.breadcrumb { position: absolute; left: 28px; top: 22px; display: flex; align-items: center; font-size: 16px; }
.breadcrumb span { margin: 0 23px 0 13px; }
.sep { width: 8px; height: 18px; margin-right: 13px; fill: none; stroke: #c0c0c0; stroke-width: 1.5; }
.toggle { position: absolute; top: 21px; width: 11px; height: 22px; background: #181818; }
.toggle svg { width: 8px; height: 14px; fill: none; stroke: #bbb; stroke-width: 1.5; }
.toggle-l { left: 0; border-radius: 0 5px 5px 0; }
.toggle-r { right: 0; border-radius: 5px 0 0 5px; }
.bar-v { position: absolute; right: 2px; top: 14px; bottom: 20px; width: 6px; border-radius: 3px; background: rgba(90, 90, 90, .45); }
.bar-h { position: absolute; left: 661px; right: 203px; bottom: 2px; height: 5px; border-radius: 3px; background: #333; }

/* nodes */
.node {
  position: absolute;
  padding-bottom: 8px;
  border-radius: 6px;
  background: #303030;
  box-shadow: 0 0 0 1px #161616, 0 4px 14px 2px rgba(0, 0, 0, .55);
}
.node h2 {
  display: flex;
  align-items: center;
  gap: 8px;
  height: 26px;
  margin: 0 0 3px;
  padding-left: 14px;
  border-radius: 6px 6px 0 0;
  border-bottom: 1px solid rgba(0, 0, 0, .3);
  font-size: 14px;
  font-weight: normal;
}
.fold { width: 12px; height: 12px; }
.vector { background: #3c3c83; }
.texture { background: #79461d; }
.converter { background: #246283; }
.color { background: #6e6e1d; }
.shader { background: #2b652b; }
.node .row { position: relative; display: flex; align-items: center; height: 29px; padding: 0 13px; }
.socket {
  position: absolute;
  left: -6px;
  width: 12px;
  height: 12px;
  border-radius: 50%;
  border: 1px solid #141414;
  background: #a1a1a1;
}
.node .out { justify-content: flex-end; padding-right: 14px; }
.out .socket { left: auto; right: -6px; }
.socket.yellow { background: #c7c729; }
.socket.blue { background: #6363c7; }
.socket.green { background: #63c763; }
.node .select { height: 25px; border-radius: 5px; }
.node .select .chev { width: 10px; height: 10px; margin-right: 3px; }
.field {
  flex: 1;
  display: flex;
  align-items: center;
  height: 24px;
  padding: 0 18px 0 20px;
  border-radius: 5px;
  box-shadow: 0 0 0 1px #3d3d3d;
  background: linear-gradient(#4772b3, #4772b3) 0 0 / var(--fill, 0) 100% no-repeat #545454;
}
.field span { white-space: nowrap; }
.field input { flex: 1; width: 20px; text-align: right; }
.swatch { height: 25px; border-radius: 5px; border: 1px solid #3d3d3d; }
.swatch.white { background: #fff; }
.swatch.black { background: #000; }
.swatch.red { background: #ff0026; }
.swatch.pale { background: #ececec; }
.inputs { display: grid; grid-auto-rows: 1fr; }
.inputs .row { height: auto; min-height: 0; }
.inputs .select { flex: 1; }
.principled .row .swatch { width: 170px; margin-left: auto; }

.mapping { left: -200px; top: 322px; width: 230px; height: 451px; }
.mapping .select { margin: 13px 13px 61px; }
.stack { display: grid; gap: 1px; height: 78px; margin: 0 13px 28px; border-radius: 5px; overflow: hidden; background: #3d3d3d; }
.stack input { background: #545454; height: 25px; }
.stack.green input { background: #467d29; }
.gradient { left: 138px; top: 350px; width: 187px; height: 163px; }
.gradient > .select { margin: 12px 13px 5px; }
.ramp { width: 321px; height: 271px; }
.ramp-a { left: 527px; top: 171px; }
.ramp-b { left: 535px; top: 635px; }
.ramp-tools { display: flex; align-items: center; margin: 18px 13px 6px 14px; }
.ramp-tools button { width: 36px; height: 25px; }
.ramp-tools button:first-child { width: 26px; }
.ramp-tools button:nth-child(2) { width: 44px; }
.ramp-tools svg { width: 12px; height: 12px; fill: none; stroke: #ddd; stroke-width: 1.5; }
.ramp-tools .select { width: 86px; }
.ramp-tools .select svg { stroke: none; }
.pair-l { margin-left: auto; }
.node .pair-l { border-radius: 5px 0 0 5px; }
.node .pair-r { border-radius: 0 5px 5px 0; border-left: 0; }
.band { position: relative; height: 27px; margin: 0 21px 12px 20px; border: 1px solid #000; border-bottom: 2px solid #777; }
.ramp-a .band { background: linear-gradient(90deg, #000 15%, #b5b5b5 18%, #fff 22.4%); }
.ramp-b .band { background: linear-gradient(90deg, #000 8%, #ddd 8%, #ddd 8.4%, #7d7878 9%, #fff1cc 16.4%, #ffe08a 19%, #ffc91a 22.8%, #cfa483 27%, #514c50 31%, #000 31.4%); }
.band svg { position: absolute; top: 11px; width: 15px; height: 20px; margin-left: -8px; }
.ramp-fields { display: flex; gap: 12px; margin: 0 13px 8px; }
.index { width: 83px; height: 25px; text-align: center; border: 1px solid #3d3d3d; border-radius: 5px; background: #545454; }
.ramp .swatch { display: block; width: 295px; margin: 0 0 5px 13px; }
.hsv { left: 968px; top: 720px; width: 201px; height: 206px; }
.hsv .inputs { height: 138px; margin-top: 5px; }
.principled { left: 1280px; top: 276px; width: 320px; height: 832px; }
.principled > .select { margin: 12px 13px 7px; }
.principled > .select + .select { margin: 0 13px 6px; }
.principled .base { height: 29px; }
.principled .inputs { height: 663px; }
.transparent { left: 1655px; top: 676px; width: 187px; height: 98px; }
.transparent .tint { margin-top: 4px; }
.transparent .swatch { width: 90px; margin-left: auto; }
.mix { left: 1948px; top: 126px; width: 186px; height: 153px; }
.mix .first { margin-top: 3px; }

/* right column */
.side { display: flex; flex-direction: column; gap: 3px; min-height: 0; padding-right: 1px; }
.outliner, .properties { position: relative; border-radius: 7px; overflow: hidden; }
.outliner { height: 221px; background: #282828; }
.properties { flex: 1; min-height: 0; display: flex; flex-direction: column; background: #303030; }
.side-header { display: flex; align-items: center; gap: 8px; height: 37px; padding: 0 11px; }
.outliner .side-header { position: relative; background: #2b2b2b; }
.search { display: flex; align-items: center; width: 172px; height: 29px; margin: 0 auto 0 13px; padding-left: 6px; border: 1px solid #3d3d3d; border-radius: 6px; background: #1d1d1d; }
.search.wide { margin-left: 69px; }
.search input { width: 120px; }
.options { height: 29px; }
.tree { margin: -3px 0 0; padding: 0; list-style: none; color: #c4c4c4; }
.tree li { display: flex; align-items: center; height: 29px; padding-left: 68px; }
.tree li:nth-child(odd) { background: #2b2b2b; }
.tree .collection { height: 28px; padding-left: 38px; }
.tri { width: 10px; height: 10px; background: #c4c4c4; clip-path: polygon(0 0, 100% 50%, 0 100%); }
.tri.open { clip-path: polygon(0 0, 100% 0, 50% 100%); }
.badge { display: grid; place-items: center; width: 28px; height: 28px; margin: 0 5px 0 10px; border-radius: 6px; }
.collection .badge { background: #4d4d4d; color: #e0e0e0; }
.orange { color: #c47f4a; }
.label + .icon { margin-left: 33px; }
.tree .data { color: #17b48c; }
.tree .mod { color: #6a8de0; }
.mod + .data { margin-left: 6px; }
.boxed { background: #505050; border-radius: 5px; box-shadow: 0 0 0 3px #505050; }
.end { display: flex; align-items: center; gap: 8px; margin-left: auto; padding-right: 17px; color: #e6e6e6; }
.end .light { width: 15px; height: 15px; margin-right: 2px; border-radius: 0; }
.end .light:checked { background: #e6e6e6; }
.end .light:checked::after { width: 10px; height: 5px; border-color: #282828; }
.tree li.active { background: #334d80; }
.active .label { color: #ffaf29; }
.tree .active .badge { background: #5f719b; color: #d08c5c; }
.tree-line { position: absolute; left: 42px; top: 68px; bottom: 22px; width: 1px; background: #666; }
.side-bar { position: absolute; right: 2px; width: 6px; border-radius: 3px; background: #484848; }
.outliner .side-bar { top: 76px; bottom: 20px; }
.properties .side-bar { top: 51px; bottom: 67px; }

.props-body { display: flex; flex: 1; min-height: 0; }
.prop-tabs { width: 42px; padding-top: 12px; background: #1d1d1d; color: #b8b8b8; }
.prop-tabs button { width: 38px; height: 40px; margin-left: 4px; }
.prop-tabs .last { margin-bottom: 11px; }
.prop-tabs .active { height: 39px; margin-bottom: 1px; background: #303030; border-radius: 6px 0 0 6px; color: #d8d8d8; }
.prop-tabs .c-red { color: #b5525c; }
.prop-tabs .c-light { color: #e0e0e0; }
.prop-tabs .c-orange { color: #c47f4a; }
.prop-tabs .c-blue { color: #5f84d6; }
.prop-tabs .c-green { color: #17b48c; }
.panels { flex: 1; padding: 13px 11px 0; overflow: hidden; }
.context { display: flex; align-items: center; gap: 13px; height: 28px; padding: 0 3px 0 5px; }
.context .pin { margin-left: auto; }
.engine { display: flex; align-items: center; justify-content: flex-end; gap: 14px; margin: 25px 0 14px; }
.engine .select { width: 218px; height: 28px; }
.panel { margin-bottom: 2px; border-radius: 6px; background: #3d3d3d; }
.panel h3 { display: flex; align-items: center; gap: 4px; height: 36px; margin: 0; padding: 3px 11px 0 13px; font-size: 16px; font-weight: normal; }
.panel h3 .check { margin-left: -1px; gap: 4px; color: #e0e0e0; }
.arrow { width: 14px; height: 14px; fill: none; stroke: #b5b5b5; stroke-width: 1.5; }
.open .arrow { transform: rotate(90deg); }
.grip { width: 16px; height: 8px; margin: 0 0 4px auto; color: #b0b0b0; }
.body { display: grid; align-items: center; text-align: right; }
.body input:not([type]) { width: 100%; text-align: center; background: #545454; }
.sampling { grid-template-columns: 147px 203px; column-gap: 14px; padding: 13px 0 17px; }
.sampling input:not([type]) { height: 28px; }
.sampling .top { border-radius: 5px 5px 0 0; border-bottom: 1px solid #3d3d3d; }
.sampling .bottom { border-radius: 0 0 5px 5px; }
.sampling .check { grid-column: 2; margin-top: 12px; }
.motion { grid-template-columns: 135px 186px; gap: 5px 14px; padding: 13px 0; color: #888; }
.motion input:not([type]), .motion .select { height: 27px; border-radius: 5px; background: #474747; }
.motion .select { background: #333; border-color: #383838; }
.motion .select .chev { color: #666; }
.motion input.half { background: linear-gradient(90deg, #465c80 49%, #474747 49%); }
.motion .spaced { margin-top: 11px; }

/* status bar */
.statusbar { display: flex; align-items: center; background: #1d1d1d; border-top: 2px solid #161616; padding: 0 12px 0 16px; color: #999; }
.statusbar div { display: flex; align-items: center; width: 350px; gap: 16px; }
.mouse { width: 18px; height: 24px; fill: currentColor; }
.version { margin-left: auto; }

/* taskbar */
.taskbar {
  display: grid;
  grid-template-columns: 1fr auto 1fr;
  align-items: center;
  background: #dadada;
  border-top: 2px solid #adadad;
  color: #1a1a1a;
  font: 18px/25px "Open Sans", "Noto Sans CJK KR", sans-serif;
}
.weather { display: flex; align-items: center; gap: 7px; padding-left: 32px; }
.weather svg { width: 36px; height: 32px; }
.weather div { display: grid; }
.weather b { font-size: 17px; font-weight: normal; line-height: 22px; }
.weather span { color: #555; font-size: 19px; line-height: 22px; }
.apps { display: flex; align-items: center; height: 70px; margin-right: 3px; padding-bottom: 2px; }
.apps button { position: relative; width: 58px; height: 59px; margin: 0 4px; border-radius: 6px; }
.apps button svg { width: 36px; height: 36px; }
.apps .start { width: 36px; margin: 0 20px; }
.task-search { display: flex; align-items: center; gap: 16px; width: 328px; height: 47px; margin-right: 5px; padding-left: 14px; border: 2px solid #c6c6c6; border-radius: 24px; background: #f5f5f5; font-size: 21px; }
.task-search svg { width: 23px; height: 24px; fill: none; stroke: #1a1a1a; stroke-width: 2.4; }
.task-search input { width: 200px; }
.task-search input::placeholder { color: #555; }
.adobe span { width: 34px; height: 33px; border-radius: 6px; font: bold 20px/31px "Open Sans", sans-serif; }
.ai span { background: #330000; color: #ff9a00; }
.ps span { background: #001e36; color: #31a8ff; }
.apps .current { background: #eee; box-shadow: 0 1px 1px #bbb; }
.current::after, .running::after { content: ""; position: absolute; bottom: 0; width: 24px; height: 5px; border-radius: 3px; background: #0078d4; }
.running::after { width: 9px; background: #808080; }
.tray { display: flex; align-items: center; justify-content: flex-end; padding-right: 29px; }
.tray svg { width: 24px; height: 24px; margin-right: 12px; fill: none; stroke: #1a1a1a; stroke-width: 1.6; }
.tray svg:nth-child(-n+3) { margin-right: 24px; }
.clock { display: grid; width: 108px; text-align: right; }
.count { width: 24px; height: 24px; margin-left: 10px; border-radius: 50%; background: #0067c0; color: #fff; font-size: 16px; line-height: 24px; text-align: center; }
```
